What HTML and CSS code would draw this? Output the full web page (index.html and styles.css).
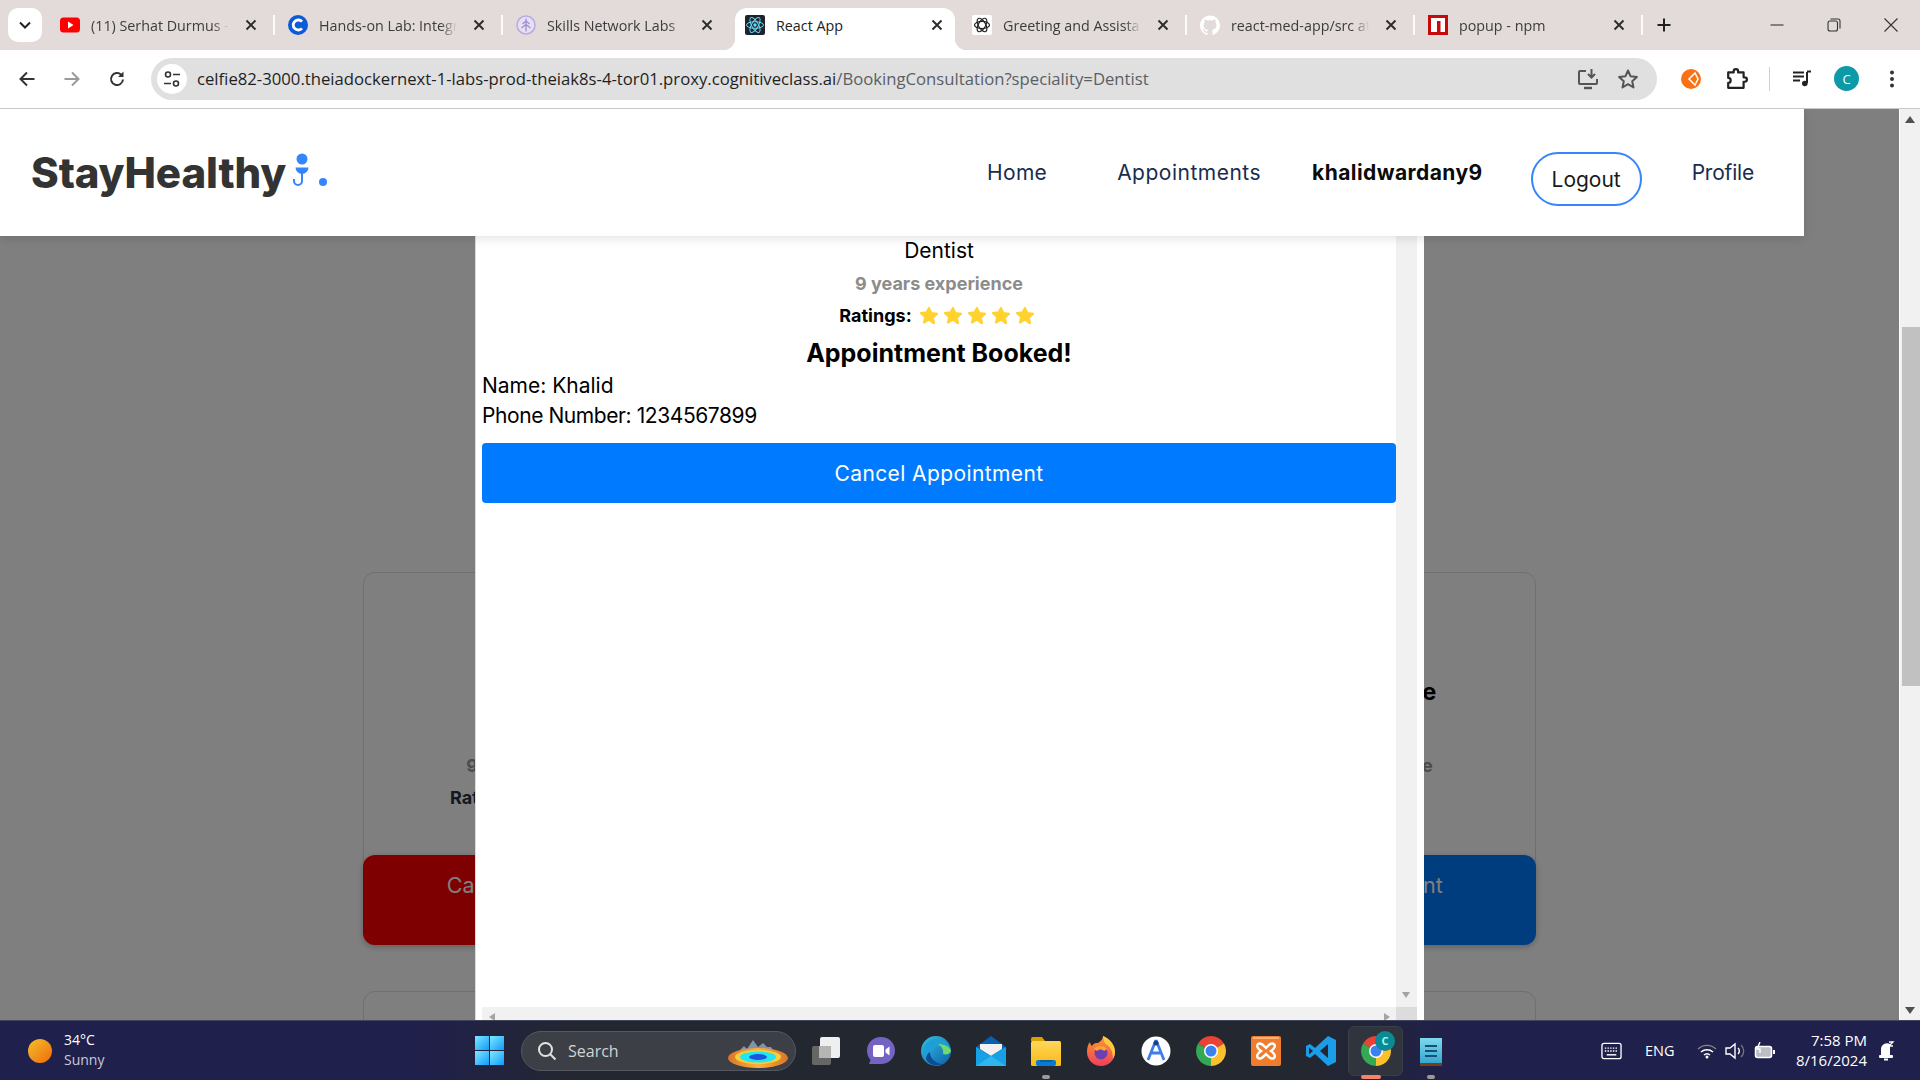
FILE: index.html
```html
<!DOCTYPE html>
<html lang="en">
<head>
<meta charset="utf-8">
<title>React App</title>
<link rel="stylesheet" href="styles.css">
</head>
<body>
<svg class="defs" width="0" height="0" aria-hidden="true">
  <defs>
    <symbol id="x" viewBox="0 0 12 12"><path d="M1.5 1.5l9 9M10.5 1.5l-9 9" fill="none" stroke="#2b2b2b" stroke-width="1.9"/></symbol>
    <symbol id="star" viewBox="0 0 24 24"><path d="M12 2.2l2.9 6.3 6.8.8-5 4.7 1.4 6.8L12 16.5l-6.1 3.4 1.4-6.8-5-4.7 6.8-.8z" fill="#ffd22e" stroke="#ffd22e" stroke-width="2.4" stroke-linejoin="round"/></symbol>
    <symbol id="chrome" viewBox="0 0 24 24">
      <path d="M12 12L1.61 6A12 12 0 0 1 22.39 6Z" fill="#ea4335"/>
      <path d="M12 12L22.39 6A12 12 0 0 1 12 24Z" fill="#fbc02d"/>
      <path d="M12 12L12 24A12 12 0 0 1 1.61 6Z" fill="#34a853"/>
      <circle cx="12" cy="12" r="5.6" fill="#fff"/><circle cx="12" cy="12" r="4.4" fill="#3b82f0"/>
    </symbol>
    <linearGradient id="sun" x1="0" y1="0" x2="1" y2="1"><stop offset="0" stop-color="#f4c02b"/><stop offset="1" stop-color="#f06a0c"/></linearGradient>
    <linearGradient id="win" x1="0" y1="0" x2="1" y2="1"><stop offset="0" stop-color="#7fe9ff"/><stop offset="1" stop-color="#0f9bfa"/></linearGradient>
    <linearGradient id="edge" x1="0" y1="0" x2="1" y2="1"><stop offset="0" stop-color="#35c1e0"/><stop offset="1" stop-color="#0c5fa8"/></linearGradient>
    <linearGradient id="fold" x1="0" y1="0" x2="0" y2="1"><stop offset="0" stop-color="#ffd75a"/><stop offset="1" stop-color="#f7b916"/></linearGradient>
    <linearGradient id="fox" x1="0" y1="0" x2="0" y2="1"><stop offset="0" stop-color="#ff9a2e"/><stop offset="1" stop-color="#ef3f5a"/></linearGradient>
    <linearGradient id="pool" x1="0" y1="0" x2="1" y2="0"><stop offset="0" stop-color="#d9762a"/><stop offset=".5" stop-color="#ffb03a"/><stop offset="1" stop-color="#d9762a"/></linearGradient>
    <linearGradient id="note" x1="0" y1="0" x2="0" y2="1"><stop offset="0" stop-color="#7fd8ee"/><stop offset="1" stop-color="#37a7cf"/></linearGradient>
  </defs>
</svg>

<div class="browser">
  <header class="tabstrip">
    <button class="tab-search"><svg width="14" height="9" viewBox="0 0 14 9"><path d="M2 1.5l5 5 5-5" fill="none" stroke="#1f1f1f" stroke-width="2"/></svg></button>
    <div class="tab divided">
      <svg class="fav" viewBox="0 0 20 20"><rect y="2.5" width="20" height="15" rx="3.5" fill="#f00"/><path d="M8 6.5l5.5 3.5L8 13.5z" fill="#fff"/></svg>
      <span class="tab-title">(11) Serhat Durmus - Topic</span>
      <svg class="tab-x"><use href="#x"/></svg>
    </div>
    <div class="tab divided">
      <svg class="fav" viewBox="0 0 20 20"><circle cx="10" cy="10" r="10" fill="#0b5ad6"/><path d="M14 6.7A5 5 0 1 0 14 13.3" fill="none" stroke="#fff" stroke-width="2.8"/></svg>
      <span class="tab-title">Hands-on Lab: Integrating</span>
      <svg class="tab-x"><use href="#x"/></svg>
    </div>
    <div class="tab">
      <svg class="fav" viewBox="0 0 20 20"><circle cx="10" cy="10" r="9" fill="#e7e0f3" stroke="#b9a9e2" stroke-width="1.5"/><path d="M10 3.5v13M10 6L6.5 9M10 6l3.500 3M10 9.5L5.500 13M10 9.5l4.500 3.500" fill="none" stroke="#a18fd6" stroke-width="1.3"/></svg>
      <span class="tab-title">Skills Network Labs</span>
      <svg class="tab-x"><use href="#x"/></svg>
    </div>
    <div class="tab active">
      <svg class="fav" viewBox="0 0 20 20"><rect width="20" height="20" rx="2" fill="#20232a"/><g fill="none" stroke="#61dafb" stroke-width="1"><ellipse cx="10" cy="10" rx="8.5" ry="3.3"/><ellipse cx="10" cy="10" rx="8.5" ry="3.3" transform="rotate(60 10 10)"/><ellipse cx="10" cy="10" rx="8.5" ry="3.3" transform="rotate(120 10 10)"/></g><circle cx="10" cy="10" r="1.7" fill="#61dafb"/></svg>
      <span class="tab-title">React App</span>
      <svg class="tab-x"><use href="#x"/></svg>
    </div>
    <div class="tab divided">
      <svg class="fav" viewBox="0 0 20 20"><rect width="20" height="20" rx="2" fill="#fff"/><g fill="none" stroke="#222" stroke-width="1.2"><ellipse cx="10" cy="10" rx="7.5" ry="3.6"/><ellipse cx="10" cy="10" rx="7.5" ry="3.6" transform="rotate(60 10 10)"/><ellipse cx="10" cy="10" rx="7.5" ry="3.6" transform="rotate(120 10 10)"/></g></svg>
      <span class="tab-title">Greeting and Assistance</span>
      <svg class="tab-x"><use href="#x"/></svg>
    </div>
    <div class="tab divided">
      <svg class="fav" viewBox="0 0 24 24"><path fill="#fff" d="M12 .5C5.37.5 0 5.87 0 12.5c0 5.3 3.44 9.8 8.2 11.39.6.11.82-.26.82-.58v-2.03c-3.34.73-4.04-1.61-4.04-1.61-.55-1.39-1.33-1.76-1.33-1.76-1.09-.74.08-.73.08-.73 1.2.09 1.84 1.24 1.84 1.24 1.07 1.83 2.81 1.3 3.5 1 .11-.78.42-1.31.76-1.61-2.67-.3-5.47-1.33-5.47-5.93 0-1.31.47-2.38 1.24-3.22-.14-.3-.54-1.52.1-3.18 0 0 1-.32 3.3 1.23a11.5 11.5 0 0 1 6 0c2.28-1.55 3.29-1.23 3.29-1.23.64 1.66.24 2.88.12 3.18a4.65 4.65 0 0 1 1.23 3.22c0 4.61-2.81 5.62-5.48 5.92.42.36.81 1.1.81 2.22v3.29c0 .32.22.7.83.58A12 12 0 0 0 12 .5z"/></svg>
      <span class="tab-title">react-med-app/src at main</span>
      <svg class="tab-x"><use href="#x"/></svg>
    </div>
    <div class="tab divided">
      <svg class="fav" viewBox="0 0 20 20"><rect width="20" height="20" fill="#c80a0a"/><rect x="3" y="3" width="14" height="14" fill="#fff"/><rect x="9" y="6" width="3.5" height="11" fill="#c80a0a"/></svg>
      <span class="tab-title">popup - npm</span>
      <svg class="tab-x"><use href="#x"/></svg>
    </div>
    <svg class="new-tab" viewBox="0 0 14 14"><path d="M7 .5v13M.5 7h13" stroke="#222" stroke-width="2"/></svg>
    <div class="win-controls">
      <svg viewBox="0 0 14 14"><path d="M.5 7h13" stroke="#333" stroke-width="1.1"/></svg>
      <svg viewBox="0 0 14 14"><rect x="1" y="3" width="9.5" height="10" rx="2" fill="none" stroke="#333" stroke-width="1.1"/><path d="M3.5 1H11a2 2 0 0 1 2 2v7.500" fill="none" stroke="#333" stroke-width="1.1"/></svg>
      <svg viewBox="0 0 14 14"><path d="M.5.5l13 13M13.500.5l-13 13" stroke="#333" stroke-width="1.1"/></svg>
    </div>
  </header>

  <div class="toolbar">
    <svg class="tool" viewBox="0 0 18 18"><path d="M16.5 9h-14M9 2.500L2.500 9 9 15.500" fill="none" stroke="#333" stroke-width="2"/></svg>
    <svg class="tool" viewBox="0 0 18 18"><path d="M1.5 9h14M9 2.500L15.500 9 9 15.500" fill="none" stroke="#9a9a9a" stroke-width="2"/></svg>
    <svg class="tool" viewBox="0 0 18 18"><path d="M15 9.500A6 6 0 1 1 13.200 4.700" fill="none" stroke="#333" stroke-width="2"/><path d="M15.500 1.500V7H10z" fill="#333"/></svg>
    <div class="omnibox">
      <span class="site-info"><svg width="18" height="18" viewBox="0 0 18 18"><circle cx="5" cy="4.500" r="2.500" fill="none" stroke="#333" stroke-width="1.600"/><path d="M10 4.500h7M1 13.500h7" stroke="#333" stroke-width="1.600"/><circle cx="13" cy="13.500" r="2.500" fill="none" stroke="#333" stroke-width="1.600"/></svg></span>
      <span class="url">celfie82-3000.theiadockernext-1-labs-prod-theiak8s-4-tor01.proxy.cognitiveclass.ai<span class="url-path">/BookingConsultation?speciality=Dentist</span></span>
      <svg class="omni-icon" viewBox="0 0 22 22"><path d="M9 3H3a1 1 0 0 0-1 1v11a1 1 0 0 0 1 1h16a1 1 0 0 0 1-1v-4" fill="none" stroke="#555" stroke-width="2"/><path d="M7 20h8" stroke="#555" stroke-width="2.400"/><path d="M14.500 1v8M11 6l3.500 3.500L18 6" fill="none" stroke="#555" stroke-width="2"/></svg>
      <svg class="omni-icon" viewBox="0 0 22 22"><path d="M11 2.500l2.600 5.800 6.300.7-4.700 4.200 1.300 6.200L11 16.200l-5.500 3.200 1.300-6.200L2.100 9l6.300-.7z" fill="none" stroke="#555" stroke-width="2" stroke-linejoin="round"/></svg>
    </div>
    <div class="tool-right">
      <svg class="ext-orange" viewBox="0 0 20 20"><circle cx="10" cy="10" r="10" fill="#f97316"/><path d="M14 4l-6 6 6 6 3-6z" fill="none" stroke="#fff" stroke-width="1.500"/></svg>
      <svg class="ext-puzzle" viewBox="0 0 20 20"><path d="M2 4h5V3a2 2 0 0 1 4 0v1h5v4.500h1a2 2 0 0 1 0 4h-1V18H2v-4.500a2.200 2.200 0 0 0 0-4.500z" fill="none" stroke="#222" stroke-width="2" stroke-linejoin="round"/></svg>
      <span class="tool-sep"></span>
      <svg class="ext-media" viewBox="0 0 20 20"><path d="M1 3.500h11M1 7.500h11M1 11.500h7" stroke="#222" stroke-width="1.800"/><path d="M15 3v11" stroke="#222" stroke-width="2"/><path d="M15 2.500h4" stroke="#222" stroke-width="2"/><circle cx="12.800" cy="14.500" r="2.800" fill="#222"/></svg>
      <span class="avatar">C</span>
      <svg class="kebab" viewBox="0 0 6 20"><circle cx="3" cy="3.500" r="2" fill="#333"/><circle cx="3" cy="10" r="2" fill="#333"/><circle cx="3" cy="16.500" r="2" fill="#333"/></svg>
    </div>
  </div>

  <main class="viewport">
    <div class="page">
      <nav class="site-nav">
        <a class="logo">StayHealthy<svg class="logo-mark" viewBox="0 0 40 60"><circle cx="12" cy="13" r="5.500" fill="#3685fb"/><path d="M5.500 21.500h13a6.500 6.500 0 0 1-13 0z" fill="#3685fb"/><path d="M12 26v9a4 4 0 0 1-8 0v-2" fill="none" stroke="#3685fb" stroke-width="2"/><circle cx="33" cy="36" r="4" fill="#3685fb"/></svg></a>
        <a class="nav-link home">Home</a>
        <a class="nav-link appts">Appointments</a>
        <a class="nav-user">khalidwardany9</a>
        <button class="logout">Logout</button>
        <a class="nav-link profile">Profile</a>
      </nav>
      <section class="doctor-grid">
        <article class="doctor-card">
          <h3 class="doc-name">Dr. Denis Raj</h3>
          <p class="doc-spec">Dentist</p>
          <p class="doc-exp">9 years experience</p>
          <p class="doc-rate">Ratings:</p>
          <button class="doc-btn cancel">Cancel Appointment<small>No Booking Fee</small></button>
        </article>
        <article class="doctor-card">
          <h3 class="doc-name">Dr. Emily Clark</h3>
          <p class="doc-spec">Dentist</p>
          <p class="doc-exp">9 years experience</p>
          <p class="doc-rate">Ratings:</p>
          <button class="doc-btn book">Book Appointment<small>No Booking Fee</small></button>
        </article>
        <article class="doctor-card">
          <h3 class="doc-name">Dr. Lyn Christie</h3>
          <p class="doc-spec">Dentist</p>
          <p class="doc-exp">9 years experience</p>
          <p class="doc-rate">Ratings:</p>
          <button class="doc-btn book">Book Appointment<small>No Booking Fee</small></button>
        </article>
        <article class="doctor-card"></article>
        <article class="doctor-card"></article>
        <article class="doctor-card"></article>
      </section>

      <div class="overlay">
        <div class="modal">
          <div class="modal-scroll">
            <div class="modal-body">
              <p class="m-spec">Dentist</p>
              <p class="m-exp">9 years experience</p>
              <p class="m-rate"><b>Ratings:</b>
                <svg class="star"><use href="#star"/></svg><svg class="star"><use href="#star"/></svg><svg class="star"><use href="#star"/></svg><svg class="star"><use href="#star"/></svg><svg class="star"><use href="#star"/></svg>
              </p>
              <h2 class="m-title">Appointment Booked!</h2>
              <p class="m-line">Name: Khalid</p>
              <p class="m-line m-phone">Phone Number: 1234567899</p>
              <button class="m-cancel">Cancel Appointment</button>
            </div>
            <div class="m-vbar"><i class="arrow-down"></i></div>
            <div class="m-hbar"><i class="arrow-left"></i><i class="arrow-right"></i></div>
            <div class="m-corner"></div>
          </div>
        </div>
      </div>
    </div>
    <div class="page-scroll">
      <i class="ps-up"></i>
      <div class="ps-thumb"></div>
      <i class="ps-down"></i>
    </div>
  </main>

  <footer class="taskbar">
    <div class="weather">
      <svg width="24" height="24" viewBox="0 0 24 24"><circle cx="12" cy="12" r="12" fill="url(#sun)"/></svg>
      <div class="weather-text"><span>34°C</span><span class="dim">Sunny</span></div>
    </div>
    <svg class="start" viewBox="0 0 29 29"><rect width="14" height="14" fill="url(#win)"/><rect x="15" width="14" height="14" fill="url(#win)"/><rect y="15" width="14" height="14" fill="url(#win)"/><rect x="15" y="15" width="14" height="14" fill="url(#win)"/></svg>
    <div class="search">
      <svg width="20" height="20" viewBox="0 0 20 20"><circle cx="8.500" cy="8.500" r="6.500" fill="none" stroke="#e3e3e3" stroke-width="2"/><path d="M13.500 13.500l5 5" stroke="#e3e3e3" stroke-width="2"/></svg>
      <span>Search</span>
      <svg class="search-art" width="62" height="36" viewBox="0 0 62 36"><path d="M10 18l6-6 3 3 6-9 5 7 5-4 4 4h4l4 6z" fill="#7f95a8"/><ellipse cx="30" cy="24" rx="30" ry="10" fill="url(#pool)"/><ellipse cx="30" cy="23" rx="23" ry="7" fill="#f7cf3d"/><ellipse cx="30" cy="23" rx="18" ry="5.500" fill="#22e6f0"/><ellipse cx="30" cy="23" rx="9" ry="3" fill="#1d55e0"/></svg>
    </div>
    <div class="apps">
      <span class="app"><svg viewBox="0 0 30 30"><rect x="1" y="10" width="19" height="19" rx="2" fill="#666"/><rect x="9" y="1" width="20" height="21" rx="2" fill="#efefef"/><rect x="8" y="10" width="12" height="12" fill="#b5b5b5"/></svg></span>
      <span class="app"><svg viewBox="0 0 30 30"><path d="M15 1c8 0 14 6 14 13.500S23 28 15 28H3l1.500-4C2 21 1 18 1 14.500 1 7 7 1 15 1z" fill="#7563c4"/><rect x="7" y="9" width="11" height="12" rx="2" fill="#fff"/><path d="M19.500 13.500l4-3v9l-4-3z" fill="#fff"/></svg></span>
      <span class="app"><svg viewBox="0 0 30 30"><circle cx="15" cy="15" r="15" fill="url(#edge)"/><path d="M2 15C3 6 11 3 16 3c7 0 13 5 14 12-2 2-5 3-8 2.500 1-2 1-4-1-6-3-2.500-9-1-10 5-1 5 3 11 9 13-9 1-17-5-18-14.500z" fill="#1e9fd8"/><path d="M17 8c6 0 11 2 13 7-1 3-4 4-8 3 1-3-1-8-5-10z" fill="#6fdb6a"/><path d="M9 16c0 6 6 12 13 12-6 3-14 1-17-5 0-3 2-6 4-7z" fill="#0c4c94"/></svg></span>
      <span class="app"><svg viewBox="0 0 30 30"><path d="M0 11L15 0l15 11v19H0z" fill="#0a5fae"/><path d="M4 8h22v5L15 20 4 13z" fill="#f1f1f1"/><path d="M0 11l15 9 15-9v19H0z" fill="#16a1e6"/><path d="M0 30l15-10 15 10z" fill="#2fb6ee"/></svg></span>
      <span class="app"><svg viewBox="0 0 30 30"><path d="M0 3a2 2 0 0 1 2-2h9l3 4H0z" fill="#d9a100"/><rect y="5" width="30" height="25" rx="1.500" fill="url(#fold)"/><rect x="5" y="24" width="20" height="6" rx="2" fill="#0a7ad1"/><rect x="9" y="24" width="12" height="2" fill="#0f5ea5"/></svg></span>
      <span class="app"><svg viewBox="0 0 30 30"><path d="M17 0c7 3 12 9 12 16a14 14 0 0 1-28 0c0-4 1-8 3-10 0 2 1 3 2 4 2-3 3-3 6-3 3-2 5-4 5-7z" fill="url(#fox)"/><path d="M17 0c7 3 12 9 12 16 0 2-1 5-2 7 0-6-2-12-6-14-2-1-3-3-4-9z" fill="#ffc93c"/><circle cx="15" cy="17" r="6.500" fill="#6d3fb5"/><path d="M8 13c3-4 10-4 13 0l-3 2c-2-2-5-2-7 0z" fill="#ffa42e"/></svg></span>
      <span class="app"><svg viewBox="0 0 30 30"><circle cx="15" cy="15" r="14.500" fill="#fff"/><path d="M15 4L7 24M15 4l8 20M10 17h10" fill="none" stroke="#3f7de8" stroke-width="2.800"/><circle cx="15" cy="7" r="2.500" fill="#1c3f8c"/></svg></span>
      <span class="app"><svg class="big" viewBox="0 0 24 24"><use href="#chrome"/></svg></span>
      <span class="app"><svg viewBox="0 0 30 30"><rect width="30" height="30" rx="2" fill="#f07c2e"/><rect x="2" y="1" width="26" height="2" fill="#f9b27a"/><path d="M7 8c3-2 5 1 8 4 3-3 5-6 8-4 2 2 0 5-3 7 3 2 5 5 3 7-3 2-5-1-8-4-3 3-5 6-8 4-2-2 0-5 3-7-3-2-5-5-3-7z" fill="none" stroke="#fff" stroke-width="2.400"/></svg></span>
      <span class="app"><svg viewBox="0 0 30 30"><path d="M22 0l8 4v22l-8 4L9 18l-5 4-4-2V10l4-2 5 4zM22 8l-8 7 8 7zM3 11.500v7L7 15z" fill="#1b9de8" fill-rule="evenodd"/></svg></span>
      <span class="app current"><svg class="big" viewBox="0 0 24 24"><use href="#chrome"/></svg><b class="app-badge">C</b></span>
      <span class="app"><svg viewBox="0 0 30 30"><rect x="4" y="2" width="22" height="28" fill="#7a3f10"/><rect x="4" y="2" width="22" height="25" fill="url(#note)"/><path d="M9 10h12M9 15h12M9 20h12" stroke="#17516f" stroke-width="2"/></svg></span>
      <i class="run run-files"></i><i class="run run-chrome"></i><i class="run run-notes"></i>
    </div>
    <div class="tray">
      <svg class="t-kbd" viewBox="0 0 22 18"><rect x="1" y="1" width="20" height="16" rx="2" fill="none" stroke="#fff" stroke-width="1.400"/><path d="M4 6h14M4 9h14" stroke="#fff" stroke-width="1.500" stroke-dasharray="1.500 1.300"/><path d="M6 13h10" stroke="#fff" stroke-width="1.500"/></svg>
      <span class="t-lang">ENG</span>
      <svg class="t-wifi" viewBox="0 0 20 16"><path d="M1 6a13 13 0 0 1 18 0" fill="none" stroke="#888" stroke-width="1.300"/><path d="M4 9a9 9 0 0 1 12 0M7 12a4.500 4.500 0 0 1 6 0" fill="none" stroke="#fff" stroke-width="1.500"/><circle cx="10" cy="14" r="1.500" fill="#fff"/></svg>
      <svg class="t-vol" viewBox="0 0 20 18"><path d="M1 6h4l5-4v14l-5-4H1z" fill="none" stroke="#fff" stroke-width="1.400"/><path d="M13 6a4 4 0 0 1 0 6" fill="none" stroke="#fff" stroke-width="1.400"/><path d="M16 3a8 8 0 0 1 0 12" fill="none" stroke="#777" stroke-width="1.300"/></svg>
      <svg class="t-bat" viewBox="0 0 22 18"><rect x="1.500" y="4.500" width="16" height="11" rx="2" fill="#bdbdc6" stroke="#fff" stroke-width="1.500"/><rect x="19" y="8" width="2" height="4" fill="#fff"/><path d="M6 0L3 7h3v4" fill="none" stroke="#fff" stroke-width="1.400"/></svg>
      <div class="clock"><span>7:58 PM</span><span>8/16/2024</span></div>
      <svg class="t-bell" viewBox="0 0 18 22"><path d="M3 16V9a6 6 0 0 1 9-5v12z" fill="#fff"/><rect x="1" y="15" width="14" height="3" rx="1" fill="#fff"/><path d="M6 19.500h4" stroke="#fff" stroke-width="2"/><path d="M11 2h4l-4 4h4" fill="none" stroke="#fff" stroke-width="1.300"/></svg>
    </div>
  </footer>
</div>
</body>
</html>
```

FILE: styles.css
```css
* { box-sizing: border-box; }
html, body { margin: 0; padding: 0; height: 100%; overflow: hidden; }
body { font-family: "Open Sans", "Noto Sans", sans-serif; color: #1f1f1f; }
.defs { position: absolute; }
button { font: inherit; border: 0; padding: 0; }
p, h2, h3 { margin: 0; }

.browser { display: flex; flex-direction: column; width: 1920px; height: 1080px; }

/* tab strip */
.tabstrip { display: flex; align-items: center; height: 50px; flex: none; background: #e2dbd9; padding-left: 8px; }
.tab-search { width: 34px; height: 34px; flex: none; margin-right: 5px; border-radius: 10px; background: #fff; display: flex; align-items: center; justify-content: center; }
.tab { position: relative; display: flex; align-items: center; flex: none; width: 228px; height: 42px; margin-top: 8px; padding: 0 0 0 13px; font-size: 14.3px; color: #3c3c3c; }
.tab.divided::after { content: ""; position: absolute; right: 0; top: 7px; width: 2px; height: 20px; background: #fbfbfb; }
.tab.active { width: 220px; margin: 8px 4px 0; padding-left: 10px; background: #fff; border-radius: 12px 12px 0 0; color: #222; }
.tab.active::before, .tab.active::after { content: ""; position: absolute; bottom: 0; width: 12px; height: 12px; }
.tab.active::before { left: -12px; background: radial-gradient(circle at 0 0, transparent 12px, #fff 12.5px); }
.tab.active::after { right: -12px; background: radial-gradient(circle at 100% 0, transparent 12px, #fff 12.5px); }
.fav { width: 20px; height: 20px; flex: none; margin-right: 11px; margin-top: -8px; }
.tab-title { width: 138px; flex: none; white-space: nowrap; overflow: hidden; margin-top: -8px; -webkit-mask-image: linear-gradient(90deg, #000 88%, transparent); mask-image: linear-gradient(90deg, #000 88%, transparent); }
.tab-x { width: 12px; height: 12px; flex: none; margin-left: 16px; margin-top: -8px; }
.active .tab-title { -webkit-mask-image: none; mask-image: none; width: 139px; }
.new-tab { width: 14px; height: 14px; flex: none; margin-left: 14px; }
.win-controls { display: flex; align-items: center; gap: 43px; margin-left: auto; padding-right: 22px; }
.win-controls svg { width: 14px; height: 14px; }

/* toolbar */
.toolbar { display: flex; align-items: center; height: 59px; flex: none; background: #fff; border-radius: 12px 12px 0 0; border-bottom: 1px solid #c9c9c9; padding: 0 0 1px 18px; }
.tool { width: 18px; height: 18px; flex: none; margin-right: 27px; }
.omnibox { display: flex; align-items: center; width: 1506px; height: 42px; margin-left: -2px; flex: none; border-radius: 21px; background: #e0e0e0; padding: 0 18px 0 6px; }
.site-info { width: 30px; height: 30px; flex: none; border-radius: 50%; background: #fff; display: flex; align-items: center; justify-content: center; }
.url { margin-left: 10px; font-size: 16.7px; white-space: nowrap; flex: 1; color: #1f1f1f; }
.url-path { color: #5a5f66; }
.omni-icon { width: 22px; height: 22px; flex: none; margin-left: 18px; }
.tool-right { display: flex; align-items: center; flex: 1; padding-left: 24px; }
.ext-orange { width: 20px; height: 20px; }
.ext-puzzle { width: 22px; height: 22px; margin-left: 25px; }
.tool-sep { width: 1px; height: 24px; background: #d8cfcc; margin-left: 21px; }
.ext-media { width: 20px; height: 20px; margin-left: 22px; }
.avatar { width: 25px; height: 25px; margin-left: 22px; border-radius: 50%; background: #0d9aa8; color: #fff; font-size: 13px; display: flex; align-items: center; justify-content: center; }
.kebab { width: 6px; height: 20px; margin-left: 30px; }

/* viewport */
.viewport { flex: 1; min-height: 0; display: flex; background: #fff; }
.page { position: relative; flex: 1; min-width: 0; overflow: hidden; font-family: Inter, "Open Sans", sans-serif; }
.page-scroll { width: 21px; flex: none; background: #f1f1f1; position: relative; border-left: 1px solid #fff; padding-left: 1px; }
.ps-up { position: absolute; left: 5px; top: 7px; border: 5px solid transparent; border-top: 0; border-bottom: 7px solid #505050; }
.ps-thumb { position: absolute; left: 2px; right: 0; top: 218px; height: 359px; background: #c1c1c1; }
.ps-down { position: absolute; left: 5px; bottom: 6px; border: 5px solid transparent; border-bottom: 0; border-top: 7px solid #505050; }

/* site nav */
.site-nav { position: relative; z-index: 2; display: flex; align-items: center; width: 1804px; height: 127px; background: #fff; padding-left: 31px; box-shadow: 0 2px 10px rgba(0,0,0,.12); }
.logo { display: flex; align-items: center; font-size: 42px; font-weight: 800; color: #333; letter-spacing: -.1px; }
.logo-mark { width: 40px; height: 60px; margin-left: 4px; margin-top: 7px; }
.nav-link { font-size: 21px; color: #1a2c4e; white-space: nowrap; }
.home { margin-left: auto; letter-spacing: .3px; }
.appts { margin-left: 70px; letter-spacing: .5px; }
.nav-user { margin-left: 51px; font-size: 21px; font-weight: 700; color: #0b0b0b; white-space: nowrap; letter-spacing: .43px; }
.logout { width: 111px; height: 54px; margin: 13px 0 0 48px; flex: none; background: #fff; border: 2px solid #3685fb; border-radius: 27px; font-size: 21px; color: #1a1a1a; font-family: inherit; }
.profile { margin-left: 50px; margin-right: 50px; letter-spacing: -.2px; }

/* doctor cards behind the dialog */
.doctor-grid { display: grid; grid-template-columns: repeat(3, 1fr); gap: 46px 25px; width: 1173px; margin: 336px 0 0 363px; }
.doctor-card { display: flex; flex-direction: column; align-items: center; height: 373px; border: 1px solid #dedede; border-radius: 12px; padding-top: 106px; text-align: center; }
.doc-name { font-size: 23.6px; font-weight: 700; line-height: 26px; color: #000; }
.doc-spec { font-size: 20px; line-height: 30px; margin-top: 13px; }
.doc-exp { font-size: 18px; font-weight: 700; line-height: 26px; color: #999; margin-top: 5px; }
.doc-rate { font-size: 18px; font-weight: 700; line-height: 26px; color: #2a3040; margin-top: 6px; align-self: flex-start; margin-left: 86px; }
.doc-btn { margin: auto -1px -1px; width: calc(100% + 2px); height: 90px; flex: none; border-radius: 12px; color: #fff; font-size: 21.5px; font-family: inherit; padding-bottom: 2px; box-shadow: 0 2px 6px rgba(0,0,0,.25); }
.doc-btn small { display: block; font-size: 16px; margin-top: 8px; }
.cancel { background: #f00; }
.book { background: #007bff; }

/* dialog */
.overlay { position: absolute; inset: 0; z-index: 1; background: rgba(0,0,0,.5); padding-left: 475px; display: flex; }
.modal { width: 949px; margin-top: 0; background: #fff; border-left: 1px solid #dcdcdc; padding: 0 7px 0 6px; }
.modal-scroll { display: grid; grid-template-columns: 914px 21px; grid-template-rows: 898px 13px; height: 911px; }
.modal-body { padding-top: 128px; display: flex; flex-direction: column; align-items: center; color: #000; }
.m-spec { font-size: 21px; line-height: 28px; }
.m-exp { margin-top: 5px; font-size: 18px; line-height: 28px; font-weight: 700; color: #8c8c8c; }
.m-rate { display: flex; align-items: center; margin-top: 4px; font-size: 18px; line-height: 28px; height: 28px; }
.m-rate b { margin-right: 7px; font-weight: 700; }
.star { width: 20px; height: 20px; margin-right: 4px; }
.m-title { margin-top: 7px; font-size: 25px; line-height: 32px; font-weight: 700; }
.m-line { align-self: flex-start; font-size: 21px; line-height: 30px; }
.m-title + .m-line { margin-top: 2px; }
.m-phone { letter-spacing: -.42px; }
.m-cancel { width: 100%; height: 60px; flex: none; margin-top: 12px; border-radius: 4px; background: #007bff; color: #fff; font-size: 21px; letter-spacing: .4px; font-family: inherit; }
.m-vbar { position: relative; background: #f1f1f1; }
.arrow-down { position: absolute; left: 6px; bottom: 9px; border: 4.5px solid transparent; border-bottom: 0; border-top: 6px solid #a3a3a3; }
.m-hbar { position: relative; background: #f1f1f1; }
.arrow-left { position: absolute; left: 7px; top: 6px; border: 4.5px solid transparent; border-left: 0; border-right: 6px solid #a3a3a3; }
.arrow-right { position: absolute; right: 6px; top: 6px; border: 4.5px solid transparent; border-right: 0; border-left: 6px solid #a3a3a3; }
.m-corner { background: #dcdcdc; }

/* taskbar */
.taskbar { position: relative; display: flex; align-items: center; height: 60px; flex: none; border-top: 1px solid #43455f; padding-left: 28px; color: #fff; background: linear-gradient(90deg, #20204c 0, #20204c 22%, #23272f 30%, #23272f 68%, #20204c 76%, #20204c 100%); }
.weather { display: flex; align-items: center; gap: 12px; width: 447px; flex: none; }
.weather-text { display: flex; flex-direction: column; font-size: 14px; line-height: 20px; margin-top: -2px; }
.dim { color: #c9c9d6; }
.start { width: 29px; height: 29px; flex: none; }
.search { position: relative; display: flex; align-items: center; width: 275px; height: 40px; flex: none; margin-left: 17px; padding-left: 15px; gap: 11px; border-radius: 20px; background: #3c3f46; border: 1px solid #555860; color: #d3d3d3; font-size: 16px; }
.search-art { position: absolute; right: 5px; top: 2px; }
.apps { position: relative; display: flex; margin-left: 2px; flex: none; }
.app { position: relative; width: 55px; height: 50px; display: flex; align-items: center; justify-content: center; border-radius: 6px; }
.app svg { width: 30px; height: 30px; }
.app svg.big { width: 30px; height: 30px; }
.app.current { background: #30343c; border: 1px solid #3a3e46; }
.app-badge { position: absolute; right: 7px; top: 4px; width: 20px; height: 20px; border-radius: 50%; background: #0b8a96; color: #9fe; font-size: 11px; display: flex; align-items: center; justify-content: center; }
.run { position: absolute; bottom: -3px; height: 4px; border-radius: 2px; background: #9a9a9a; width: 8px; }
.run-files { left: 244px; }
.run-chrome { left: 563px; width: 20px; background: #f4826d; }
.run-notes { left: 629px; }
.tray { display: flex; align-items: center; margin-left: auto; padding-right: 24px; }
.t-kbd { width: 21px; height: 18px; }
.t-lang { margin-left: 23px; font-size: 14.5px; width: 32px; }
.t-wifi { width: 20px; height: 16px; margin-left: 20px; }
.t-vol { width: 20px; height: 18px; margin-left: 8px; }
.t-bat { width: 22px; height: 18px; margin-left: 9px; }
.clock { display: flex; flex-direction: column; align-items: flex-end; margin-left: 20px; font-size: 15px; line-height: 20px; margin-top: -2px; }
.t-bell { width: 18px; height: 22px; margin-left: 11px; }
```
